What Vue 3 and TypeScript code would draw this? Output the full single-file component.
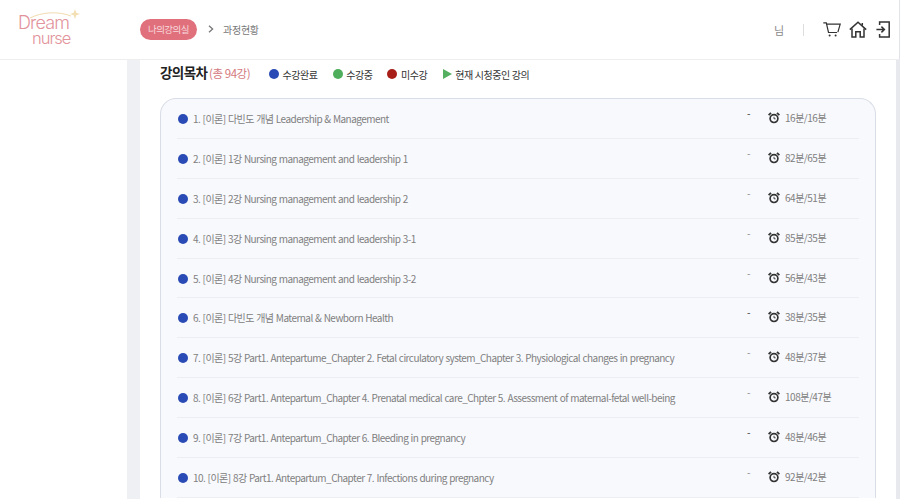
<script setup lang="ts">
interface Row { title: string; time: string; dash: number }
const rows: Row[] = [
  { title: '1. [이론] 다빈도 개념 Leadership & Management', time: '16분/16분', dash: 0 },
  { title: '2. [이론] 1강 Nursing management and leadership 1', time: '82분/65분', dash: 1 },
  { title: '3. [이론] 2강 Nursing management and leadership 2', time: '64분/51분', dash: 1 },
  { title: '4. [이론] 3강 Nursing management and leadership 3-1', time: '85분/35분', dash: 1 },
  { title: '5. [이론] 4강 Nursing management and leadership 3-2', time: '56분/43분', dash: 1 },
  { title: '6. [이론] 다빈도 개념 Maternal & Newborn Health', time: '38분/35분', dash: 0 },
  { title: '7. [이론] 5강 Part1. Antepartume_Chapter 2. Fetal circulatory system_Chapter 3. Physiological changes in pregnancy', time: '48분/37분', dash: 1 },
  { title: '8. [이론] 6강 Part1. Antepartum_Chapter 4. Prenatal medical care_Chpter 5. Assessment of maternal-fetal well-being', time: '108분/47분', dash: 1 },
  { title: '9. [이론] 7강 Part1. Antepartum_Chapter 6. Bleeding in pregnancy', time: '48분/46분', dash: 0 },
  { title: '10. [이론] 8강 Part1. Antepartum_Chapter 7. Infections during pregnancy', time: '92분/42분', dash: 1 },
]
</script>

<template>
  <div class="page">
    <header class="top">
      <div class="logo">
        <svg class="arc" width="62" height="20" viewBox="0 0 62 20">
          <path d="M12 12C24 6 40 5 53 10" fill="none" stroke="#f0dcae" stroke-width="1" />
          <path d="M57 3l1.3 3.7L62 8l-3.7 1.3L57 13l-1.3-3.7L52 8l3.7-1.3z" fill="#f3dfb2" />
        </svg>
        <div class="logo-a">Dream</div>
        <div class="logo-b">nurse</div>
      </div>
      <nav class="crumbs">
        <span class="pill">나의강의실</span>
        <svg width="6" height="8" viewBox="0 0 6 8"><path d="M1 .8 4.6 4 1 7.2" fill="none" stroke="#777" stroke-width="1.3" /></svg>
        <span class="crumb">과정현황</span>
      </nav>
      <div class="tools">
        <span class="user">님</span>
        <span class="sep"></span>
        <svg class="cart" width="18" height="15" viewBox="0 0 18 15" fill="none" stroke="#333" stroke-width="1.2">
          <path d="M.3 .8h3l2.2 9.7h8.6" />
          <path d="M3.2 2.2h14l-2.3 8" />
          <circle cx="6.6" cy="13.4" r="1" fill="#333" stroke="none" />
          <circle cx="12.6" cy="13.4" r="1" fill="#333" stroke="none" />
        </svg>
        <svg width="18" height="17" viewBox="0 0 18 17" fill="none" stroke="#333" stroke-width="1.5">
          <path d="M.8 8.6 9 1.3l8.2 7.3" />
          <path d="M3 7.4V16h3.8v-5.2h4.4V16H15V7.4" />
          <path d="M13.3 2v2.6" />
        </svg>
        <svg width="14" height="17" viewBox="0 0 14 17" fill="none" stroke="#333" stroke-width="1.5">
          <path d="M3.6 4V1h9.6v15H3.6v-3" />
          <path d="M.4 8.5h8M5.4 5.6l3 2.9-3 2.9" />
        </svg>
      </div>
    </header>

    <div class="body">
      <aside class="side"></aside>
      <main class="main">
        <div class="head">
          <h2 class="title">강의목차 <small>(총 94강)</small></h2>
          <ul class="legend">
            <li><i class="dot blue"></i>수강완료</li>
            <li><i class="dot green"></i>수강중</li>
            <li><i class="dot red"></i>미수강</li>
            <li><i class="tri"></i>현재 시청중인 강의</li>
          </ul>
        </div>
        <section class="card">
          <div v-for="r in rows" :key="r.title" class="row">
            <i class="dot blue big"></i>
            <span class="name">{{ r.title }}</span>
            <span class="dash" :class="{ faint: r.dash === 1 }">-</span>
            <svg class="clock" width="12" height="12" viewBox="0 0 12 12" fill="none" stroke="#333">
              <circle cx="6" cy="6.6" r="3.9" stroke-width="1.7" />
              <path d="M6 4.8v2h1.6" stroke-width=".9" />
              <path d="M.6 3.2 3 .8M11.4 3.2 9 .8" stroke-width="1.8" />
            </svg>
            <span class="time">{{ r.time }}</span>
          </div>
        </section>
      </main>
      <div class="rail"></div>
    </div>
  </div>
</template>

<style>
html, body { margin: 0; background: #fff; overflow: hidden; }
</style>

<style scoped>
.page {
  width: 900px;
  height: 499px;
  overflow: hidden;
  font-family: "Noto Sans CJK KR", "Noto Sans", sans-serif;
  color: #333;
}
.top {
  height: 60px;
  box-sizing: border-box;
  border-bottom: 1px solid #eee;
  border-right: 1px solid #e2e3e8;
  display: flex;
  align-items: center;
}
.logo {
  width: 140px;
  flex: none;
  padding-left: 18px;
  box-sizing: border-box;
  color: #e2939b;
  font-family: "Inter", sans-serif;
  font-weight: 300;
  position: relative;
  height: 44px;
  margin-top: -1px;
}
.arc { position: absolute; left: 18px; top: -1px; }
.logo-a { font-size: 18px; letter-spacing: -.85px; line-height: 18px; margin-top: 7px; }
.logo-b { font-size: 16.5px; letter-spacing: -1px; margin-left: 14px; line-height: 13px; }
.crumbs { display: flex; align-items: center; font-size: 10px; margin-top: -1px; }
.pill {
  width: 57px;
  height: 21px;
  border-radius: 10.5px;
  background: #e0707c;
  color: #f8dadd;
  line-height: 21px;
  text-align: center;
  font-size: 9.5px;
  letter-spacing: -.5px;
  margin-right: 11px;
}
.crumb { margin-left: 9px; color: #777; letter-spacing: -.25px; }
.tools {
  margin-left: auto;
  display: flex;
  align-items: center;
  gap: 9px;
  padding-right: 9px;
}
.cart { margin-right: -1px; }
.user { font-size: 11px; color: #888; margin-right: 10px; }
.sep { width: 1px; height: 12px; background: #ddd; margin-right: 10px; }
.body { display: flex; height: 439px; }
.side { width: 127px; flex: none; }
.main {
  flex: none;
  width: 769px;
  box-sizing: border-box;
  border-left: 13px solid #eef0f4;
  padding: 0 20px 0 20px;
}
.rail { flex: 1; background: #e8e9ef; }
.head { display: flex; align-items: center; height: 27px; }
.title { margin: -1px 0 0; font-size: 13.5px; font-weight: 700; color: #222; letter-spacing: -.55px; width: 109px; flex: none; white-space: nowrap; line-height: 27px; }
.title small { font-size: 11.5px; font-weight: 400; color: #d47a80; letter-spacing: -.45px; margin-left: -1px; }
.legend { list-style: none; margin: 0; padding: 0; display: flex; gap: 15px; font-size: 10px; color: #333; margin-top: 1px; }
.legend li { display: flex; align-items: center; gap: 3.5px; letter-spacing: -.42px; }
.legend li:last-child { margin-left: 1px; gap: 3px; }
.dot { width: 10px; height: 10px; border-radius: 50%; display: inline-block; flex: none; }
.blue { background: #2a4bb5; }
.green { background: #4fae5b; }
.red { background: #a81f1a; }
.tri { width: 0; height: 0; border-left: 9px solid #54b060; border-top: 5px solid transparent; border-bottom: 5px solid transparent; }
.card {
  margin-top: 11px;
  border: 1px solid #d9dde6;
  border-bottom: 0;
  border-radius: 16px 16px 0 0;
  background: #f8f9fd;
  padding: 0 16px;
}
.row {
  height: 39.9px;
  box-sizing: border-box;
  border-bottom: 1px solid #eceef3;
  display: flex;
  align-items: center;
  position: relative;
  font-size: 10px;
  letter-spacing: -.535px;
  word-spacing: .6px;
  color: #808080;
}
.big { margin: 1px 5px 0 1px; }
.name { flex: 1; white-space: nowrap; }
.dash { position: absolute; left: 570px; top: 7px; font-size: 10px; line-height: 14px; color: #333; }
.dash.faint { color: #888; }
.clock { position: absolute; left: 591px; top: 13px; }
.time { position: absolute; left: 608px; top: 10px; line-height: 18px; letter-spacing: -.48px; }
</style>
